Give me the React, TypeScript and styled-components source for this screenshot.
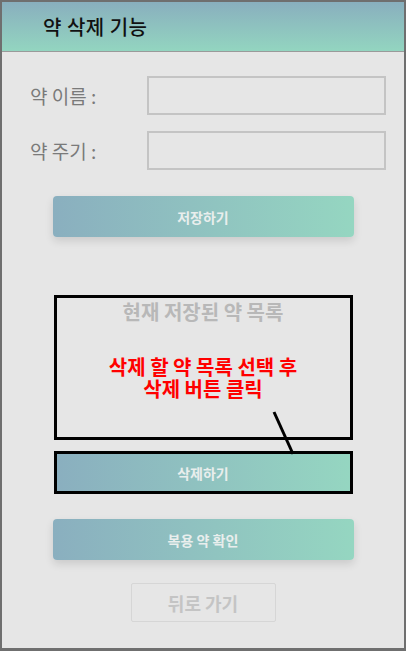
import React from "react";
import styled, {createGlobalStyle} from "styled-components";

const GlobalStyle = createGlobalStyle`
  html, body {
    margin: 0;
    padding: 0;
    background: #e6e6e6;
  }
  * {
    box-sizing: border-box;
  }
`

const KR = `"Noto Sans CJK KR", "Noto Sans", sans-serif`;

const App = () => {
    return (
        <>
            <GlobalStyle/>
            <Frame>
                <Header>
                    <Title>약 삭제 기능</Title>
                </Header>
                <Body>
                    <Form>
                        <FieldRow>
                            <Label>약 이름 :</Label>
                            <Input/>
                        </FieldRow>
                        <FieldRow>
                            <Label>약 주기 :</Label>
                            <Input/>
                        </FieldRow>
                    </Form>
                    <GradientButton>저장하기</GradientButton>
                    <ListSection>
                        <ListBox>
                            <ListTitle>현재 저장된 약 목록</ListTitle>
                            <Note>
                                <NoteLine>삭제 할 약 목록 선택 후</NoteLine>
                                <NoteLine>삭제 버튼 클릭</NoteLine>
                            </Note>
                        </ListBox>
                        <Pointer width="30" height="46" viewBox="0 0 30 46">
                            <line x1="4" y1="2" x2="23" y2="44" stroke="#000" strokeWidth="3"/>
                        </Pointer>
                        <Highlight>
                            <GradientButton $flat>삭제하기</GradientButton>
                        </Highlight>
                    </ListSection>
                    <GradientButton>복용 약 확인</GradientButton>
                    <BackButton>뒤로 가기</BackButton>
                </Body>
            </Frame>
        </>
    );
}

export default App;


const Frame = styled.div`
  width: 406px;
  height: 651px;
  border: 2px solid #6f6f6f;
  border-bottom-width: 3px;
  display: flex;
  flex-direction: column;
  background: #e6e6e6;
  font-family: ${KR};
`

const Header = styled.div`
  height: 50px;
  flex-shrink: 0;
  background: linear-gradient(to bottom, #89afbe, #93d5c0);
  border-bottom: 1px solid #9a9a9a;
  display: flex;
  align-items: center;
  padding-left: 41px;
`

const Title = styled.h1`
  margin: 0;
  font-size: 20px;
  font-weight: 500;
  color: #111;
  letter-spacing: 0.5px;
`

const Body = styled.div`
  display: flex;
  flex-direction: column;
  align-items: center;
  padding-top: 24px;
`

const Form = styled.div`
  display: flex;
  flex-direction: column;
  gap: 16px;
  width: 100%;
  padding: 0 18px 0 28px;
  margin-bottom: 26px;
`

const FieldRow = styled.div`
  display: flex;
  align-items: center;
  justify-content: space-between;
`

const Label = styled.span`
  font-size: 19px;
  color: #7a7a7a;
`

const Input = styled.div`
  width: 239px;
  height: 39px;
  border: 2px solid #c4c4c4;
`

const GradientButton = styled.div<{ $flat?: boolean }>`
  width: 301px;
  height: 41px;
  border-radius: ${p => p.$flat ? 0 : '4px'};
  background: linear-gradient(to right, #8aafbf, #95d6c1);
  box-shadow: ${p => p.$flat ? 'none' : '0 4px 8px rgba(0, 0, 0, 0.12)'};
  display: flex;
  align-items: center;
  justify-content: center;
  color: #e9eeed;
  font-size: 14px;
  font-weight: 700;
  margin-bottom: 22px;
`

const ListSection = styled.div`
  position: relative;
  display: flex;
  flex-direction: column;
  align-items: center;
  margin-top: 36px;
  margin-bottom: 25px;
`

const ListBox = styled.div`
  width: 299px;
  height: 145px;
  border: 3px solid #000;
  display: flex;
  flex-direction: column;
  align-items: center;
  margin-bottom: 11px;
`

const ListTitle = styled.div`
  font-size: 20px;
  font-weight: 700;
  line-height: 26px;
  color: #b8b8b8;
  margin-top: 1px;
`

const Note = styled.div`
  margin-top: 31px;
  display: flex;
  flex-direction: column;
  align-items: center;
  color: #ff0000;
`

const NoteLine = styled.div`
  font-size: 20px;
  font-weight: 700;
  line-height: 22px;
  height: 22px;
`

const Pointer = styled.svg`
  position: absolute;
  left: 216px;
  top: 115px;
`

const Highlight = styled.div`
  width: 299px;
  height: 43px;
  border: 3px solid #000;
  display: flex;

  & > div {
    width: 100%;
    height: 100%;
    margin: 0;
  }
`

const BackButton = styled.div`
  width: 145px;
  height: 39px;
  border: 1px solid #d6d6d6;
  border-radius: 2px;
  display: flex;
  align-items: center;
  justify-content: center;
  font-size: 18px;
  font-weight: 700;
  color: #c4c4c4;
  margin-top: 1px;
`
